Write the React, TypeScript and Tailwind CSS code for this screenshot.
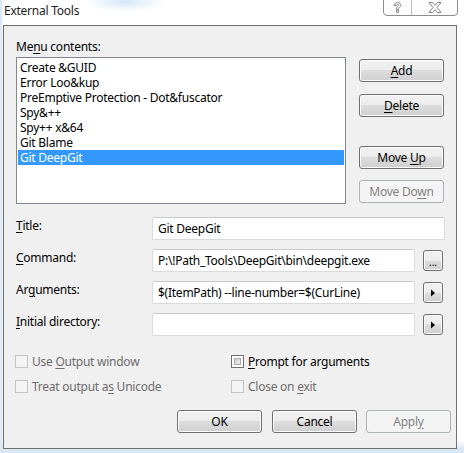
import React from "react";

const U = ({ children }: { children: React.ReactNode }) => (
  <span className="underline underline-offset-[2px] decoration-1">{children}</span>
);

const Btn = ({
  children,
  disabled,
  className = "",
}: {
  children: React.ReactNode;
  disabled?: boolean;
  className?: string;
}) => (
  <div
    className={
      "h-[23px] w-[85px] shrink-0 rounded-[3px] border flex items-center justify-center text-[12px] leading-none " +
      (disabled
        ? "border-[#adb2b5] bg-[#f4f4f4] text-[#838383] "
        : "border-[#707070] bg-[linear-gradient(to_bottom,#f2f2f2_0%,#ebebeb_50%,#dddddd_50%,#cfcfcf_100%)] text-black shadow-[inset_0_0_0_1px_#fcfcfc] ") +
      className
    }
  >
    <span className="whitespace-pre">{children}</span>
  </div>
);

const SmallBtn = ({ children }: { children: React.ReactNode }) => (
  <div className="ml-[8px] h-[21px] w-[20px] shrink-0 rounded-[3px] border border-[#707070] bg-[linear-gradient(to_bottom,#f2f2f2_0%,#ebebeb_50%,#dddddd_50%,#cfcfcf_100%)] shadow-[inset_0_0_0_1px_#fcfcfc] flex items-center justify-center">
    {children}
  </div>
);

const Input = ({ value, w }: { value?: string; w: string }) => (
  <div
    className={
      "h-[23px] shrink-0 rounded-[2px] border border-[#d9dadc] border-t-[#c9cacd] bg-white pl-[5px] flex items-center text-[12px] text-black whitespace-nowrap overflow-hidden " +
      w
    }
  >
    <span>{value}</span>
  </div>
);

const Check = ({
  label,
  disabled,
}: {
  label: React.ReactNode;
  disabled?: boolean;
}) => (
  <div className="flex items-center h-[13px]">
    <div
      className={
        "h-[13px] w-[13px] shrink-0 border " +
        (disabled
          ? "border-[#c4c4c4] bg-[#f4f4f4]"
          : "border-[#707070] bg-white p-[2px]")
      }
    >
      {!disabled && (
        <div className="h-full w-full border border-[#a9abad] bg-[linear-gradient(135deg,#c8cacc,#f0f0f0)]" />
      )}
    </div>
    <div
      className={
        "ml-[4px] text-[12px] leading-[15px] whitespace-nowrap " +
        (disabled ? "text-[#6d6d6d]" : "text-black")
      }
    >
      {label}
    </div>
  </div>
);

const Field = ({
  label,
  children,
  className = "",
}: {
  label: React.ReactNode;
  children: React.ReactNode;
  className?: string;
}) => (
  <div className={"flex items-start h-[23px] " + className}>
    <div className="w-[136px] shrink-0 text-[12px] leading-[15px] mt-[1px] text-black">
      {label}
    </div>
    <div className="flex items-center">{children}</div>
  </div>
);

const Arrow = () => (
  <svg width="6" height="8" viewBox="0 0 6 8">
    <path d="M1 0.5 L5 4 L1 7.5 Z" fill="#000" />
  </svg>
);

export default function App() {
  const items = [
    "Create &GUID",
    "Error Loo&kup",
    "PreEmptive Protection - Dot&fuscator",
    "Spy&++",
    "Spy++ x&64",
    "Git Blame",
    "Git DeepGit",
  ];
  return (
    <div
      className="relative w-[464px] h-[453px] overflow-hidden bg-[#ffffff] tracking-[-0.25px]"
      style={{ fontFamily: '"Noto Sans", "Segoe UI", sans-serif' }}
    >
      {/* blurred background */}
      <div className="absolute inset-0 bg-[radial-gradient(ellipse_40px_10px_at_125px_2px,#d4e7f8,transparent),linear-gradient(to_bottom,transparent_440px,#d8e7f6_449px),linear-gradient(to_right,#d5e6f6_0px,#eef5fc_3px,transparent_3px)]" />

      <div className="relative">
        {/* title bar */}
        <div className="relative h-[25px]">
          <div className="absolute left-[4px] top-[3px] text-[12px] leading-[15px] text-[#1e1e1e]">
            External Tools
          </div>
          <div className="absolute left-[383px] top-[-1px] h-[17px] w-[75px] flex rounded-b-[4px] border border-[#8d8d8d] bg-[#fdfdfd] overflow-hidden">
            <div className="w-[28px] border-r border-[#c0c0c0] flex items-center justify-center">
              <svg width="9" height="11" viewBox="0 0 9 11">
                <path
                  d="M1 3.5 C1 1.5 2.5 0.7 4.5 0.7 C6.5 0.7 8 1.7 8 3.3 C8 5 6 5.3 5.6 6.6 L5.6 7.3 L3.4 7.3 L3.4 6.3 C3.6 4.7 5.7 4.4 5.7 3.4 C5.7 2.8 5.2 2.5 4.5 2.5 C3.7 2.5 3.3 2.9 3.2 3.6 Z M3.4 8.3 L5.6 8.3 L5.6 10.3 L3.4 10.3 Z"
                  fill="#fff"
                  stroke="#6a6a6a"
                  strokeWidth="0.8"
                />
              </svg>
            </div>
            <div className="flex-1 flex items-center justify-center">
              <svg width="14" height="11" viewBox="0 0 14 11">
                <path
                  d="M1 0.5 L4.5 0.5 L7 3.5 L9.5 0.5 L13 0.5 L9 5.5 L13 10.5 L9.5 10.5 L7 7.5 L4.5 10.5 L1 10.5 L5 5.5 Z"
                  fill="#fff"
                  stroke="#6a6a6a"
                  strokeWidth="0.8"
                />
              </svg>
            </div>
          </div>
        </div>

        {/* frame */}
        <div className="ml-[3px] w-[454px] h-[424px] border border-[#707070] bg-[#f0f0f0] pl-[12px] pt-[13px]">
          {/* top section */}
          <div className="flex">
            <div className="w-[330px]">
              <div className="h-[15px] text-[12px] leading-[15px] text-black">
                Me<U>n</U>u contents:
              </div>
              <div className="mt-[3px] h-[147px] border border-[#828790] bg-white pt-[2px] px-[1px]">
                {items.map((it, i) => (
                  <div
                    key={it}
                    className={
                      "h-[15px] text-[12px] leading-[15px] pl-[2px] whitespace-nowrap " +
                      (i === items.length - 1
                        ? "bg-[#3399ff] text-white"
                        : "text-black")
                    }
                  >
                    {it}
                  </div>
                ))}
              </div>
            </div>
            <div className="ml-[13px] pt-[20px] flex flex-col">
              <Btn>
                <U>A</U>dd
              </Btn>
              <Btn className="mt-[12px]">
                <U>D</U>elete
              </Btn>
              <Btn className="mt-[29px]">
                {"Move "}
                <U>U</U>p
              </Btn>
              <Btn disabled className="mt-[11px]">
                Move Do<U>w</U>n
              </Btn>
            </div>
          </div>

          {/* fields */}
          <Field className="mt-[13px]" label={<><U>T</U>itle:</>}>
            <Input value="Git DeepGit" w="w-[293px]" />
          </Field>
          <Field className="mt-[9px]" label={<><U>C</U>ommand:</>}>
            <Input value="P:\!Path_Tools\DeepGit\bin\deepgit.exe" w="w-[263px]" />
            <SmallBtn>
              <span className="text-[10px] leading-none mt-[2px] tracking-[0px]">...</span>
            </SmallBtn>
          </Field>
          <Field className="mt-[9px]" label={<>Ar<U>g</U>uments:</>}>
            <Input value="$(ItemPath) --line-number=$(CurLine)" w="w-[263px]" />
            <SmallBtn>
              <Arrow />
            </SmallBtn>
          </Field>
          <Field className="mt-[9px]" label={<><U>I</U>nitial directory:</>}>
            <Input w="w-[263px]" />
            <SmallBtn>
              <Arrow />
            </SmallBtn>
          </Field>

          {/* checkboxes */}
          <div className="mt-[19px] -ml-[1px] flex">
            <div className="w-[216px] flex flex-col">
              <Check disabled label={<>Use <U>O</U>utput window</>} />
              <div className="mt-[12px]">
                <Check disabled label={<>Treat output a<U>s</U> Unicode</>} />
              </div>
            </div>
            <div className="flex flex-col">
              <Check label={<><U>P</U>rompt for arguments</>} />
              <div className="mt-[12px]">
                <Check disabled label={<>Close on <U>e</U>xit</>} />
              </div>
            </div>
          </div>

          {/* buttons */}
          <div className="mt-[17px] ml-[161px] flex">
            <Btn>OK</Btn>
            <Btn className="ml-[10px]">Cancel</Btn>
            <Btn disabled className="ml-[9px]">
              Appl<U>y</U>
            </Btn>
          </div>
        </div>
      </div>
    </div>
  );
}
